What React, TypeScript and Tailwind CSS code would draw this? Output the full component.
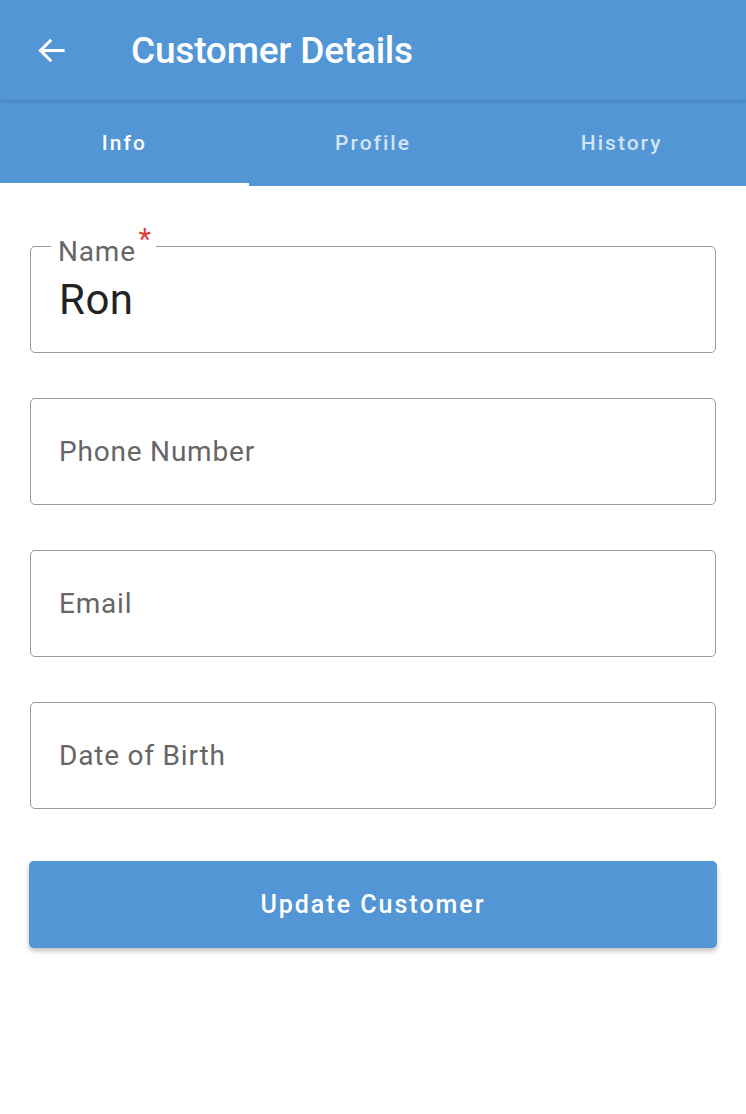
import React from "react";

function Field({ label, value, required }: { label: string; value?: string; required?: boolean }) {
  if (value) {
    return (
      <div className="relative h-[107px] rounded-[5px] border-[1.5px] border-[#9a9a9a] px-[28px]">
        <div className="absolute left-[20px] top-[-13px] bg-white pl-[7px] pr-[20px] text-[28px] leading-[36px] tracking-[0.8px] text-[#666]">
          {label}
          {required && <span className="absolute right-[4px] top-[-13px] text-[29px] text-[#e53935]">*</span>}
        </div>
        <div className="pt-[30px] text-[42px] leading-[46px] tracking-[0.5px] text-[#222]">{value}</div>
      </div>
    );
  }
  return (
    <div className="flex h-[107px] items-center rounded-[5px] border-[1.5px] border-[#9a9a9a] px-[28px]">
      <span className="text-[28px] leading-[36px] tracking-[0.8px] text-[#666]">{label}</span>
    </div>
  );
}

export default function App() {
  return (
    <div className="min-h-[1114px] w-[746px] bg-white" style={{ fontFamily: "Roboto, 'Noto Sans', sans-serif" }}>
      <div className="relative z-10 flex h-[100px] items-center bg-[#5296d6] shadow-[0_2px_3px_rgba(0,0,0,0.12)]">
        <svg className="ml-[36px]" width="31" height="31" viewBox="0 0 24 24" fill="none" stroke="white" strokeWidth="2.3" strokeLinecap="square">
          <path d="M21 12H4" />
          <path d="M11 4.5 3.5 12l7.5 7.5" />
        </svg>
        <div className="ml-[64px] text-[37px] font-medium leading-none tracking-[-0.2px] text-white">Customer Details</div>
      </div>
      <div className="flex h-[86px] bg-[#5296d6]">
        <div className="relative flex flex-1 items-center justify-center pt-[2px]">
          <span className="text-[21px] font-medium tracking-[2px] text-white">Info</span>
          <div className="absolute bottom-0 left-0 right-0 h-[3px] bg-white" />
        </div>
        <div className="flex flex-1 items-center justify-center pt-[2px]">
          <span className="text-[21px] font-medium tracking-[2px] text-white/75">Profile</span>
        </div>
        <div className="flex flex-1 items-center justify-center pt-[2px]">
          <span className="text-[21px] font-medium tracking-[2px] text-white/75">History</span>
        </div>
      </div>
      <div className="flex flex-col gap-[45px] px-[30px] pt-[60px]">
        <Field label="Name" value="Ron" required />
        <Field label="Phone Number" />
        <Field label="Email" />
        <Field label="Date of Birth" />
      </div>
      <div className="px-[29px] pt-[52px]">
        <button className="flex h-[87px] w-full items-center justify-center rounded-[5px] bg-[#5296d6] text-[25px] font-medium tracking-[2px] text-white shadow-[0_3px_5px_rgba(0,0,0,0.25)]">
          Update Customer
        </button>
      </div>
    </div>
  );
}
